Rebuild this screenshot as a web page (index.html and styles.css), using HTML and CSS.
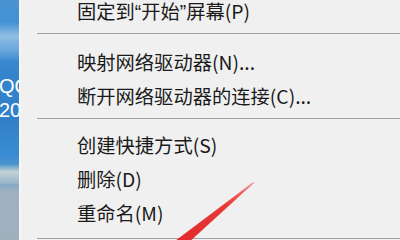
FILE: index.html
```html
<!DOCTYPE html>
<html lang="zh-CN">
<head>
<meta charset="utf-8">
<link rel="stylesheet" href="styles.css">
</head>
<body>
<div class="screen">
  <div class="desktop">
    <div class="cloud cloud-top"></div>
    <div class="desk-label">
      <span class="line">QQ</span>
      <span class="line">20</span>
    </div>
    <div class="cloud cloud-bottom"></div>
  </div>
  <div class="menu">
    <div class="list">
      <div class="item item-first">固定到<span class="q">“</span>开始<span class="q">”</span>屏幕(P)</div>
      <div class="sep sep-a"></div>
      <div class="item">映射网络驱动器(N)...</div>
      <div class="item">断开网络驱动器的连接(C)...</div>
      <div class="sep sep-b"></div>
      <div class="item">创建快捷方式(S)</div>
      <div class="item">删除(D)</div>
      <div class="item">重命名(M)</div>
      <div class="sep sep-c"></div>
    </div>
  </div>
  <svg class="arrow" width="400" height="240" viewBox="0 0 400 240">
    <defs>
      <linearGradient id="ag" x1="1" y1="0" x2="0" y2="1">
        <stop offset="0" stop-color="#f08a8a"/>
        <stop offset="0.35" stop-color="#e83a3a"/>
        <stop offset="1" stop-color="#e0282a"/>
      </linearGradient>
    </defs>
    <polygon points="255,182 187,244 171,244 252,183" fill="url(#ag)"/>
  </svg>
</div>
</body>
</html>
```

FILE: styles.css
```css
html, body {
  margin: 0;
  padding: 0;
}
body {
  width: 400px;
  height: 240px;
  overflow: hidden;
  background: #f0f0f0;
}
.screen {
  position: relative;
  display: flex;
  width: 400px;
  height: 240px;
  overflow: hidden;
}
.desktop {
  position: relative;
  width: 19px;
  flex: none;
  overflow: hidden;
  background: linear-gradient(180deg, #4a93d2 0%, #3f8fd4 15%, #3485cc 30%, #2f80c8 50%, #3a8cd2 65%, #5b9ccc 72%, #9fb2c2 80%, #9fb0bd 100%);
  border-right: 2px solid #f7f4f8;
}
.cloud {
  position: absolute;
  left: -10px;
  right: -10px;
}
.cloud-top {
  top: 22px;
  height: 40px;
  background: linear-gradient(180deg, rgba(180,210,235,0) 0%, rgba(170,205,232,0.75) 35%, rgba(150,195,230,0.5) 70%, rgba(150,195,230,0) 100%);
}
.cloud-bottom {
  top: 164px;
  height: 20px;
  background: linear-gradient(180deg, rgba(230,232,225,0) 0%, rgba(225,225,215,0.8) 40%, rgba(180,195,205,0.4) 100%);
}
.desk-label {
  position: absolute;
  left: -1px;
  top: 74px;
  display: flex;
  flex-direction: column;
  font-family: "Liberation Sans", "Noto Sans CJK SC", sans-serif;
  font-size: 20px;
  line-height: 24px;
  color: #ffffff;
  white-space: nowrap;
}
.line {
  display: block;
}
.menu {
  flex: 1;
  background: #f0f0f0;
  overflow: hidden;
}
.list {
  display: flex;
  flex-direction: column;
}
.item {
  height: 34px;
  line-height: 34px;
  padding-left: 56px;
  font-family: "Noto Sans CJK SC", "Microsoft YaHei", sans-serif;
  font-size: 19.3px;
  color: #1a1a1a;
  white-space: nowrap;
}
.item-first {
  height: 26px;
  padding-top: 1px;
  line-height: 21px;
}
.q {
  font-family: "Liberation Sans", sans-serif;
}
.sep {
  height: 1px;
  margin-left: 16px;
  background: #a3a3a3;
}
.sep-a {
  margin-top: 6px;
  margin-bottom: 11px;
}
.sep-b {
  margin-top: 5px;
  margin-bottom: 9px;
}
.sep-c {
  margin-top: 8px;
}
.arrow {
  position: absolute;
  left: 0;
  top: 0;
  pointer-events: none;
}
```
